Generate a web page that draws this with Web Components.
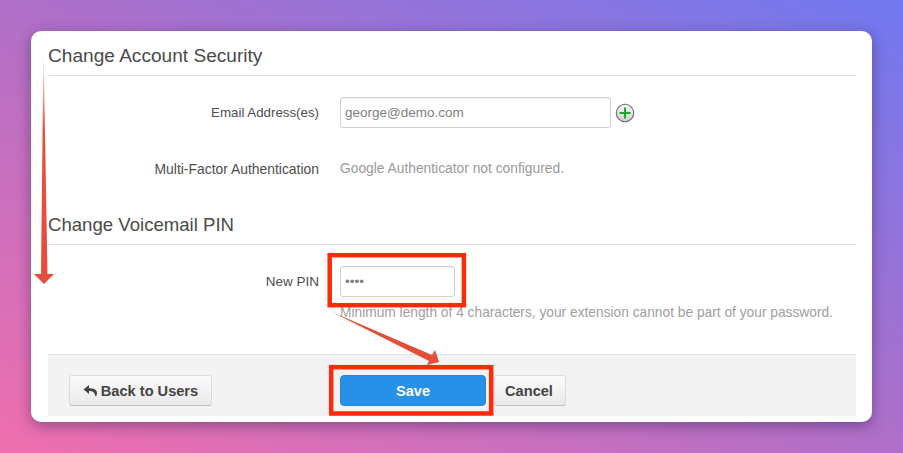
<!DOCTYPE html>
<html>
<head>
<meta charset="utf-8">
<style>
  html, body { margin: 0; height: 100%; }
  body {
    width: 903px;
    height: 453px;
    overflow: hidden;
    box-sizing: border-box;
    padding: 31px;
    background: linear-gradient(to top right, #f06fae 0%, #b06fc8 50%, #7078f0 100%);
    font-family: "Liberation Sans", Arial, sans-serif;
  }
</style>
</head>
<body>
<settings-card>
  <form-section heading="Change Account Security" style="--heading-size:19.1px">
    <form-field label="Email Address(es)" style="--field-top:21px;--label-size:13.3px">
      <text-box value="george@demo.com" width="271"></text-box>
      <add-icon></add-icon>
    </form-field>
    <form-field label="Multi-Factor Authentication" style="--field-top:25px;--label-size:13.9px">
      <span style="color:#999;font-size:13.8px;line-height:33px">Google Authenticator not configured.</span>
    </form-field>
  </form-section>
  <form-section heading="Change Voicemail PIN" style="--section-top:16px;--heading-size:18.6px">
    <form-field label="New PIN" style="--field-top:21px;--label-size:13.5px">
      <text-box value="••••" width="115"></text-box>
    </form-field>
    <form-hint>Minimum length of 4 characters, your extension cannot be part of your password.</form-hint>
  </form-section>
  <form-footer>
    <push-button style="--w:143px;--ml:21px"><back-icon></back-icon>Back to Users</push-button>
    <push-button primary style="--w:146px;--ml:128px">Save</push-button>
    <push-button style="--w:72px;--ml:8px;--pr:2px">Cancel</push-button>
  </form-footer>
  <mark-up></mark-up>
</settings-card>

<script>
  class SettingsCard extends HTMLElement {
    constructor() {
      super();
      this.attachShadow({ mode: 'open' });
      this.shadowRoot.innerHTML = `
        <style>
          :host {
            display: block;
            position: relative;
            box-sizing: border-box;
            width: 841px;
            height: 391px;
            padding: 0 16px 0 17px;
            background: #fff;
            border-radius: 10px;
            box-shadow: 0 4px 14px rgba(50, 30, 80, 0.45);
          }
        </style>
        <slot></slot>
      `;
    }
  }

  class FormSection extends HTMLElement {
    constructor() {
      super();
      this.attachShadow({ mode: 'open' });
      this.shadowRoot.innerHTML = `
        <style>
          :host { display: block; padding-top: var(--section-top, 0); }
          h2 {
            margin: 0;
            height: 44px;
            border-bottom: 1px solid #e2e2e2;
            font-size: var(--heading-size, 19px);
            font-weight: normal;
            line-height: 50px;
            color: #4a4a4a;
          }
        </style>
        <h2></h2>
        <slot></slot>
      `;
      this.shadowRoot.querySelector('h2').textContent = this.getAttribute('heading');
    }
  }

  class FormField extends HTMLElement {
    constructor() {
      super();
      this.attachShadow({ mode: 'open' });
      this.shadowRoot.innerHTML = `
        <style>
          :host {
            display: grid;
            grid-template-columns: 271px 1fr;
            column-gap: 21px;
            align-items: center;
            padding-top: var(--field-top, 0);
          }
          label { text-align: right; font-size: var(--label-size, 13.5px); color: #4d4d4d; }
          div { display: flex; align-items: center; gap: 4px; height: 31px; }
        </style>
        <label></label>
        <div><slot></slot></div>
      `;
      this.shadowRoot.querySelector('label').textContent = this.getAttribute('label');
    }
  }

  class TextBox extends HTMLElement {
    constructor() {
      super();
      this.attachShadow({ mode: 'open' });
      this.shadowRoot.innerHTML = `
        <style>
          :host { display: block; }
          div {
            box-sizing: border-box;
            height: 31px;
            padding: 0 4px;
            border: 1px solid #d0d0d0;
            border-radius: 3px;
            box-shadow: inset 0 1px 1px rgba(0, 0, 0, 0.05);
            font-size: 13.5px;
            line-height: 29px;
            color: #808080;
          }
        </style>
        <div></div>
      `;
      const box = this.shadowRoot.querySelector('div');
      box.textContent = this.getAttribute('value');
      box.style.width = this.getAttribute('width') + 'px';
    }
  }

  class AddIcon extends HTMLElement {
    constructor() {
      super();
      this.attachShadow({ mode: 'open' });
      this.shadowRoot.innerHTML = `
        <style>:host { display: block; width: 20px; height: 20px; }</style>
        <svg width="20" height="20" viewBox="0 0 20 20">
          <defs>
            <linearGradient id="g" x1="0" y1="0" x2="0" y2="1">
              <stop offset="0" stop-color="#f6f6f6"/>
              <stop offset="1" stop-color="#cfcfcf"/>
            </linearGradient>
          </defs>
          <circle cx="10" cy="10" r="8.7" fill="url(#g)" stroke="#6a6a6a" stroke-width="1.100"/>
          <path d="M10 4.500v11M4.500 10h11" stroke="#1aa82a" stroke-width="2"/>
        </svg>
      `;
    }
  }

  class FormHint extends HTMLElement {
    constructor() {
      super();
      this.attachShadow({ mode: 'open' });
      this.shadowRoot.innerHTML = `
        <style>
          :host {
            display: block;
            margin: 7px 0 0 292px;
            font-size: 13.75px;
            line-height: 17px;
            color: #a0a0a0;
            white-space: nowrap;
          }
        </style>
        <slot></slot>
      `;
    }
  }

  class FormFooter extends HTMLElement {
    constructor() {
      super();
      this.attachShadow({ mode: 'open' });
      this.shadowRoot.innerHTML = `
        <style>
          :host {
            display: flex;
            align-items: flex-start;
            box-sizing: border-box;
            height: 62px;
            margin-top: 33px;
            padding-top: 20px;
            background: #f3f3f3;
            border-top: 1px solid #e3e3e3;
          }
        </style>
        <slot></slot>
      `;
    }
  }

  class PushButton extends HTMLElement {
    constructor() {
      super();
      this.attachShadow({ mode: 'open' });
      this.shadowRoot.innerHTML = `
        <style>
          :host {
            display: flex;
            align-items: center;
            justify-content: center;
            gap: 3px;
            box-sizing: border-box;
            width: var(--w);
            height: 31px;
            margin-left: var(--ml, 0);
            padding-right: var(--pr, 0);
            border: 1px solid #dcdcdc;
            border-bottom-color: #bdbdbd;
            border-radius: 3px;
            background: linear-gradient(#fbfbfb, #e9e9e9);
            font-size: 14.6px;
            font-weight: bold;
            color: #444;
          }
          :host([primary]) {
            border: 1px solid #2a86d6;
            border-radius: 4px;
            background: #2791e8;
            color: #fff;
          }
        </style>
        <slot></slot>
      `;
    }
  }

  class BackIcon extends HTMLElement {
    constructor() {
      super();
      this.attachShadow({ mode: 'open' });
      this.shadowRoot.innerHTML = `
        <style>:host { display: block; width: 15px; height: 14px; }</style>
        <svg width="15" height="14" viewBox="0 0 15 14">
          <path d="M6 1 0.500 5.500 6 10V7c3.600 0 5.600 1 6.600 5.500 .9-.6 1.400-2 1.400-3.500C14 5.600 10.500 4.200 6 4.200z" fill="#444"/>
        </svg>
      `;
    }
  }

  // red annotations drawn over the form, coordinates are the page's
  class MarkUp extends HTMLElement {
    constructor() {
      super();
      this.attachShadow({ mode: 'open' });
      this.shadowRoot.innerHTML = `
        <style>
          :host {
            position: absolute;
            left: -31px;
            top: -31px;
            width: 903px;
            height: 453px;
            pointer-events: none;
          }
          svg { display: block; }
        </style>
        <svg width="903" height="453" viewBox="0 0 903 453">
          <defs>
            <linearGradient id="fade" x1="0" y1="49" x2="0" y2="130" gradientUnits="userSpaceOnUse">
              <stop offset="0" stop-color="#e84c3a" stop-opacity="0.1"/>
              <stop offset="1" stop-color="#e84c3a"/>
            </linearGradient>
          </defs>
          <path d="M43.500 49 41 274H34L44 284 54 274H47.500z" fill="url(#fade)"/>
          <path d="M332 312 432 355 435 350 439 362 427 365 429 361z" fill="#e64d38"/>
          <rect x="329.700" y="255.200" width="134.200" height="50" fill="none" stroke="#ff2a0a" stroke-width="4.500"/>
          <rect x="331.200" y="367.200" width="160" height="46.300" fill="none" stroke="#ff2a0a" stroke-width="4.500"/>
        </svg>
      `;
    }
  }

  customElements.define('settings-card', SettingsCard);
  customElements.define('form-section', FormSection);
  customElements.define('form-field', FormField);
  customElements.define('text-box', TextBox);
  customElements.define('add-icon', AddIcon);
  customElements.define('form-hint', FormHint);
  customElements.define('form-footer', FormFooter);
  customElements.define('push-button', PushButton);
  customElements.define('back-icon', BackIcon);
  customElements.define('mark-up', MarkUp);
</script>
</body>
</html>
